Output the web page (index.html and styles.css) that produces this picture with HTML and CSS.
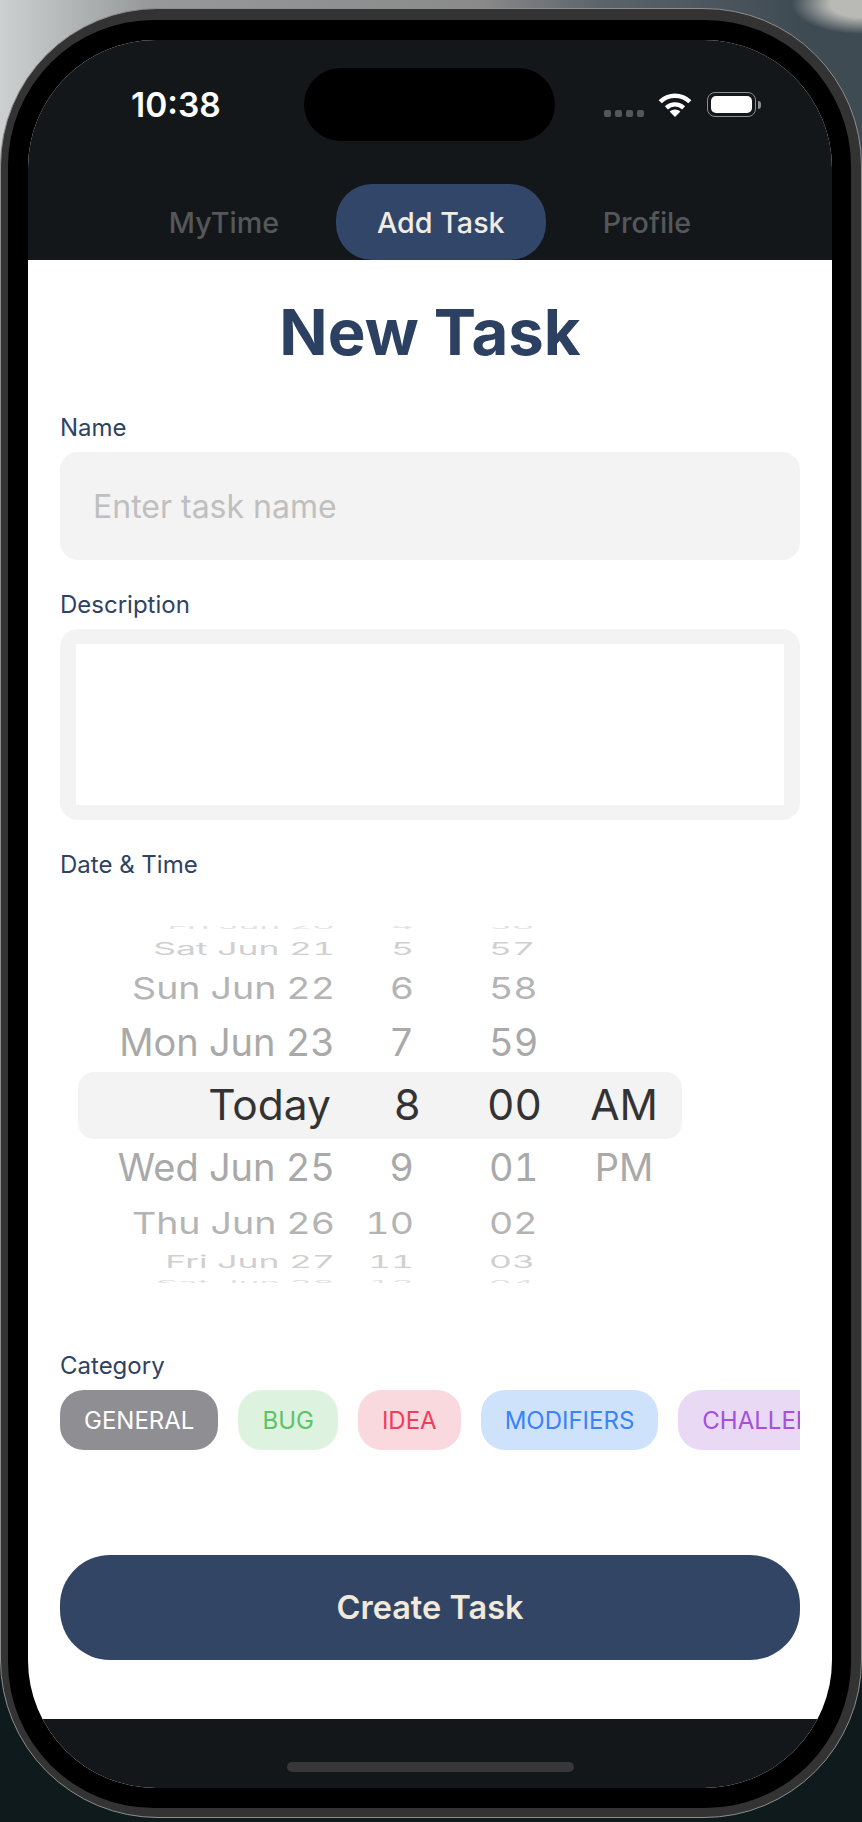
FILE: index.html
```html
<!DOCTYPE html>
<html lang="en">

<head>
    <meta charset="UTF-8">
    <meta name="viewport" content="width=device-width, initial-scale=1.0">
    <title>New Task</title>
    <link rel="stylesheet" href="styles.css">
</head>

<body>
    <div class="phone">
        <div class="bezel">
            <div class="screen">
                <header class="top-bar">
                    <div class="status-bar">
                        <span class="clock">10:38</span>
                        <div class="island"></div>
                        <div class="status-icons">
                            <div class="signal"><i></i><i></i><i></i><i></i></div>
                            <svg class="wifi" width="34" height="25" viewBox="0 0 34 25">
                                <path d="M2.2 9.8A21 21 0 0 1 31.8 9.8" fill="none" stroke="#fff" stroke-width="4.4"/>
                                <path d="M8.4 15.8A12.4 12.4 0 0 1 25.6 15.8" fill="none" stroke="#fff" stroke-width="4.4"/>
                                <path d="M17 25L11.6 19.6A7.8 7.8 0 0 1 22.4 19.6Z" fill="#fff"/>
                            </svg>
                            <div class="battery"><div class="battery-fill"></div></div>
                            <div class="battery-nub"></div>
                        </div>
                    </div>
                    <nav class="tabs">
                        <a class="tab">MyTime</a>
                        <a class="tab active">Add Task</a>
                        <a class="tab">Profile</a>
                    </nav>
                </header>

                <main class="content">
                    <h1>New Task</h1>

                    <label class="field-label first" for="task-name">Name</label>
                    <input class="text-input" id="task-name" type="text" placeholder="Enter task name">

                    <label class="field-label" for="task-desc">Description</label>
                    <div class="desc-box">
                        <textarea id="task-desc"></textarea>
                    </div>

                    <label class="field-label">Date &amp; Time</label>
                    <div class="picker">
                        <div class="picker-row r-edge top-edge"><span class="date">Fri Jun 20</span><span class="hour">4</span><span class="min">56</span><span class="ampm"></span></div>
                        <div class="picker-row r-far"><span class="date">Sat Jun 21</span><span class="hour">5</span><span class="min">57</span><span class="ampm"></span></div>
                        <div class="picker-row r-mid"><span class="date">Sun Jun 22</span><span class="hour">6</span><span class="min">58</span><span class="ampm"></span></div>
                        <div class="picker-row r-near"><span class="date">Mon Jun 23</span><span class="hour">7</span><span class="min">59</span><span class="ampm"></span></div>
                        <div class="picker-row selected"><span class="date">Today</span><span class="hour">8</span><span class="min">00</span><span class="ampm">AM</span></div>
                        <div class="picker-row r-near"><span class="date">Wed Jun 25</span><span class="hour">9</span><span class="min">01</span><span class="ampm">PM</span></div>
                        <div class="picker-row r-mid"><span class="date">Thu Jun 26</span><span class="hour">10</span><span class="min">02</span><span class="ampm"></span></div>
                        <div class="picker-row r-far"><span class="date">Fri Jun 27</span><span class="hour">11</span><span class="min">03</span><span class="ampm"></span></div>
                        <div class="picker-row r-edge bottom-edge"><span class="date">Sat Jun 28</span><span class="hour">12</span><span class="min">04</span><span class="ampm"></span></div>
                    </div>

                    <label class="field-label category-label">Category</label>
                    <div class="chips">
                        <span class="chip chip-general">GENERAL</span>
                        <span class="chip chip-bug">BUG</span>
                        <span class="chip chip-idea">IDEA</span>
                        <span class="chip chip-modifiers">MODIFIERS</span>
                        <span class="chip chip-challenge">CHALLENGE</span>
                    </div>

                    <button class="create-btn" type="button">Create Task</button>
                </main>

                <footer class="bottom-bar">
                    <div class="home-indicator"></div>
                </footer>
            </div>
        </div>
    </div>
</body>

</html>
```

FILE: styles.css
```css
* {
    box-sizing: border-box;
}

html,
body {
    margin: 0;
    padding: 0;
}

body {
    width: 862px;
    height: 1822px;
    overflow: hidden;
    font-family: Inter, "Noto Sans", sans-serif;
    background-color: #0e1a1c;
    background-image:
        radial-gradient(70px 30px at 862px 4px, #b9bab5 0, #b9bab5 45%, transparent 100%),
        linear-gradient(90deg, #cdd0d0 0, #96999a 150px, #8a8a8a 480px, #5b646b 600px, #3f4b53 800px, #3f4b53 862px);
    background-size: 100% 220px;
    background-repeat: no-repeat;
    padding-top: 8px;
}

/* device frame */
.phone {
    width: 862px;
    height: 1810px;
    padding: 11px 10px 9px 7px;
    background: #333333;
    border: 1px solid #8d8d8d;
    border-radius: 158px;
}

.bezel {
    height: 100%;
    padding: 20px 19px 20px 20px;
    background: #000000;
    border-radius: 146px;
}

.screen {
    height: 100%;
    display: flex;
    flex-direction: column;
    overflow: hidden;
    background: #ffffff;
    border-radius: 128px;
}

/* dark header */
.top-bar {
    height: 220px;
    flex-shrink: 0;
    display: flex;
    flex-direction: column;
    justify-content: space-between;
    background: #13171a;
}

.status-bar {
    display: flex;
    align-items: flex-start;
    padding-top: 28px;
}

.clock {
    width: 276px;
    padding: 17px 0 0 103px;
    color: #ffffff;
    font-size: 33.5px;
    line-height: 40px;
    font-weight: 600;
}

.island {
    width: 251px;
    height: 73px;
    background: #000000;
    border-radius: 37px;
}

.status-icons {
    display: flex;
    align-items: center;
    height: 25px;
    margin: 24px 0 0 49px;
}

.signal {
    display: flex;
    gap: 4px;
    width: 54px;
    padding-top: 18px;
}

.signal i {
    width: 7px;
    height: 7px;
    border-radius: 2px;
    background: #55585a;
}

.battery {
    width: 49px;
    height: 25px;
    margin-left: 15px;
    padding: 3px;
    border: 1.5px solid #8b8d8e;
    border-radius: 8px;
}

.battery-fill {
    height: 100%;
    background: #ffffff;
    border-radius: 5px;
}

.battery-nub {
    width: 3px;
    height: 8px;
    margin-left: 2px;
    background: #8b8d8e;
    border-radius: 0 3px 3px 0;
}

.tabs {
    display: flex;
    justify-content: center;
    gap: 16px;
}

.tab {
    height: 76px;
    padding: 0 41px;
    display: flex;
    align-items: center;
    color: #555759;
    font-size: 28.7px;
    font-weight: 500;
}

.tab.active {
    background: #32466a;
    color: #f1ece2;
    border-radius: 36px;
}

/* form */
.content {
    flex: 1;
    padding: 32px 32px 0 32px;
    display: flex;
    flex-direction: column;
    align-items: stretch;
}

h1 {
    margin: 0 0 11px;
    text-align: center;
    color: #2c4061;
    font-size: 63.5px;
    line-height: 80px;
    font-weight: 700;
}

.field-label {
    display: block;
    margin: 31px 0 10px;
    color: #2f4263;
    font-size: 24px;
    line-height: 28px;
}

.text-input {
    width: 100%;
    height: 108px;
    padding: 0 33px;
    border: none;
    outline: none;
    background: #f3f3f3;
    border-radius: 18px;
    font-family: inherit;
    font-size: 32px;
}

.text-input::placeholder {
    color: #bfbfbf;
    opacity: 1;
}

.desc-box {
    padding: 15px 16px;
    background: #f3f3f3;
    border-radius: 18px;
}

.desc-box textarea {
    display: block;
    width: 100%;
    height: 161px;
    border: none;
    outline: none;
    resize: none;
    background: #ffffff;
    border-radius: 0;
}

/* wheel picker */
.picker {
    margin: 37px 0 0 18px;
    width: 604px;
}

.picker-row {
    display: flex;
    align-items: center;
    overflow: hidden;
    color: #a9a9a9;
    font-size: 38px;
    font-variant-numeric: tabular-nums;
    white-space: nowrap;
}

.picker-row span {
    display: block;
    flex-shrink: 0;
    margin-top: -2px;
}

.date {
    width: 257px;
    text-align: right;
}

.hour {
    width: 87px;
    padding-right: 8px;
    text-align: right;
}

.min {
    width: 144px;
    padding-left: 67px;
}

.ampm {
    width: 116px;
    text-align: center;
}

.selected {
    height: 67px;
    color: #333333;
    font-size: 42.5px;
    background: #f3f3f3;
    border-radius: 16px;
}

.selected .date {
    padding-right: 4px;
}

.selected .hour {
    padding-right: 1px;
}

.selected .min {
    padding-left: 65px;
}

.r-near {
    height: 58px;
}

.r-mid {
    height: 52px;
    font-size: 37.5px;
    color: #b4b4b4;
}

.r-mid span {
    margin-top: 0;
    transform: scaleY(0.8);
}

.r-far {
    height: 26px;
    font-size: 35.5px;
    color: #d0d0d0;
}

.r-far span {
    margin-top: 0;
    transform: scaleY(0.47);
}

.r-edge {
    font-size: 35px;
    color: #e2e2e2;
}

.r-edge span {
    transform: scaleY(0.22);
}

.top-edge {
    height: 10px;
    align-items: flex-start;
}

.top-edge span {
    margin-top: -21px;
}

.bottom-edge {
    height: 8px;
    align-items: flex-end;
}

.bottom-edge span {
    margin-bottom: -21px;
}

.category-label {
    margin: 69px 0 10px;
}

.chips {
    display: flex;
    gap: 20px;
    overflow: hidden;
}

.chip {
    flex-shrink: 0;
    height: 60px;
    padding: 0 24px;
    display: flex;
    align-items: center;
    border-radius: 24px;
    font-size: 24px;
}

.chip-general {
    background: #8e8e93;
    color: #ffffff;
}

.chip-bug {
    background: #ddf3e0;
    color: #5cc466;
}

.chip-idea {
    background: #f9d8de;
    color: #ef3e5c;
}

.chip-modifiers {
    background: #cfe2fc;
    color: #3a82f6;
}

.chip-challenge {
    background: #ead9f5;
    color: #a550dc;
}

.create-btn {
    height: 105px;
    margin-top: 105px;
    border: none;
    background: #324564;
    border-radius: 50px;
    color: #f1e9dc;
    font-family: inherit;
    font-size: 32.5px;
    font-weight: 600;
}

/* bottom strip */
.bottom-bar {
    height: 69px;
    flex-shrink: 0;
    display: flex;
    justify-content: center;
    padding-top: 43px;
    background: #13171a;
}

.home-indicator {
    width: 287px;
    height: 10px;
    background: #353739;
    border-radius: 5px;
}
```
